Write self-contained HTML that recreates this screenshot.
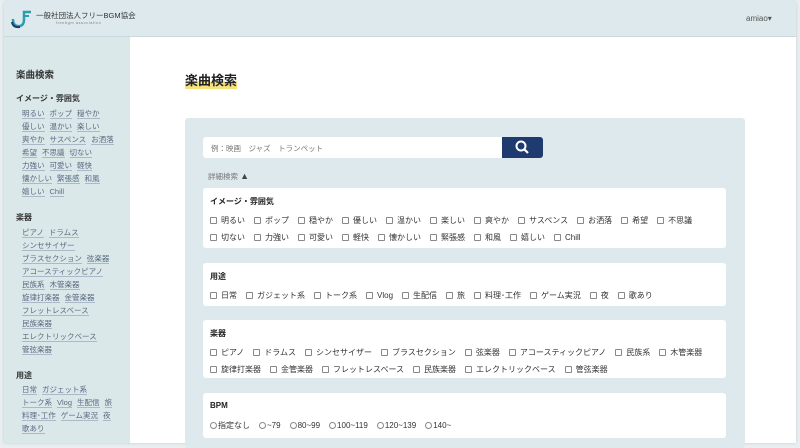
<!DOCTYPE html>
<html><head><meta charset="utf-8"><style>
*{box-sizing:border-box;margin:0;padding:0}
body{width:800px;height:443px;overflow:hidden;background:#e9eef0;font-family:"Liberation Sans","Noto Sans CJK JP",sans-serif;color:#333;position:relative}
.win{position:absolute;left:4px;top:0;width:792px;height:443px;background:#fff;border-radius:6px 6px 0 0;overflow:hidden;box-shadow:0 0 3px rgba(0,0,0,.15)}
.hdr{position:absolute;left:0;top:0;width:792px;height:37px;background:#dde9ec;border-bottom:1px solid #c9d8dc}
.side{position:absolute;left:0;top:37px;width:126px;height:406px;background:#dae8ea}
.side h3{position:absolute;font-size:9.5px;font-weight:bold;color:#333}
.side h4{position:absolute;font-size:8px;font-weight:bold;color:#333}
.links{position:absolute;left:18px;font-size:7.5px;color:#5a6a80;line-height:13px;width:108px}
.links span{border-bottom:1px solid #aab8c8;margin-right:5px;white-space:nowrap}
.title{position:absolute;left:185px;top:70px;font-size:13px;font-weight:bold;color:#222;background:linear-gradient(transparent 60%,#f5e27a 60%)}
.panel{position:absolute;left:185px;top:118px;width:560px;height:330px;background:#dde9ec;border-radius:3px}
.inp{position:absolute;left:203px;top:137px;width:299px;height:21px;background:#fff;border-radius:3px 0 0 3px;font-size:7.5px;color:#777;padding:6px 0 0 8px}
.btn{position:absolute;left:502px;top:137px;width:41px;height:21px;background:#1f3a6e;border-radius:0 3px 3px 0}
.det{position:absolute;left:208px;top:171px;font-size:7.5px;color:#777}
.card{position:absolute;left:203px;width:523px;background:#fff;border-radius:3px;padding:0 7px}
.card b{display:block;font-size:8px;color:#222;margin-top:8px;height:16px}
.row{font-size:8px;color:#333;height:17px;line-height:17px;white-space:nowrap}
.c{display:inline-block;width:7px;height:7px;border:1px solid #888;border-radius:1px;margin:0 4px 0 0;vertical-align:-1px}
.row i{font-style:normal;margin-right:9px}
.r{display:inline-block;width:7px;height:7px;border:1px solid #888;border-radius:50%;margin-right:1px;vertical-align:-1px}
</style></head><body>
<div class="win">
<div class="hdr">
<svg style="position:absolute;left:6px;top:9px" width="22" height="20" viewBox="0 0 22 20"><path d="M3 10 Q3 18 10 17 Q14 16 14 11 L14 3 L21 3" fill="none" stroke="#2a9db0" stroke-width="2.5"/><path d="M2 13 Q3 19 10 18" fill="none" stroke="#1f3a6e" stroke-width="2"/><rect x="14" y="6" width="5" height="2" fill="#2a9db0"/></svg>
<div style="position:absolute;left:32px;top:10px;font-size:7.5px;color:#333">一般社団法人フリーBGM協会</div>
<div style="position:absolute;left:52px;top:20px;font-size:4px;color:#888;letter-spacing:.5px">freebgm association</div>
<div style="position:absolute;left:742px;top:14px;font-size:8px;color:#555">amiao▾</div>
</div>
<div class="side">
<h3 style="left:12px;top:30px">楽曲検索</h3>
<h4 style="left:12px;top:56px">イメージ・雰囲気</h4>
<div class="links" style="top:70px"><span>明るい</span><span>ポップ</span><span>穏やか</span><br><span>優しい</span><span>温かい</span><span>楽しい</span><br><span>爽やか</span><span>サスペンス</span><span>お洒落</span><br><span>希望</span><span>不思議</span><span>切ない</span><br><span>力強い</span><span>可愛い</span><span>軽快</span><br><span>懐かしい</span><span>緊張感</span><span>和風</span><br><span>嬉しい</span><span>Chill</span></div>
<h4 style="left:12px;top:175px">楽器</h4>
<div class="links" style="top:189px"><span>ピアノ</span><span>ドラムス</span><br><span>シンセサイザー</span><br><span>ブラスセクション</span><span>弦楽器</span><br><span>アコースティックピアノ</span><br><span>民族系</span><span>木管楽器</span><br><span>旋律打楽器</span><span>金管楽器</span><br><span>フレットレスベース</span><br><span>民族楽器</span><br><span>エレクトリックベース</span><br><span>管弦楽器</span></div>
<h4 style="left:12px;top:333px">用途</h4>
<div class="links" style="top:346px;left:18px"><span>日常</span><span>ガジェット系</span><br><span>トーク系</span><span>Vlog</span><span>生配信</span><span>旅</span><br><span>料理･工作</span><span>ゲーム実況</span><span>夜</span><br><span>歌あり</span></div>
</div>
</div>
<div class="title">楽曲検索</div>
<div class="panel"></div>
<div class="inp">例：映画　ジャズ　トランペット</div>
<div class="btn"><svg width="41" height="21" viewBox="0 0 41 21"><circle cx="19" cy="9" r="4.5" fill="none" stroke="#fff" stroke-width="2"/><path d="M22 12 L26 16" stroke="#fff" stroke-width="2.2"/></svg></div>
<div class="det">詳細検索 <span style="color:#444;font-size:9px">▲</span></div>
<div class="card" style="top:188px;height:60px"><b>イメージ・雰囲気</b>
<div class="row"><span class="c"></span><i>明るい</i><span class="c"></span><i>ポップ</i><span class="c"></span><i>穏やか</i><span class="c"></span><i>優しい</i><span class="c"></span><i>温かい</i><span class="c"></span><i>楽しい</i><span class="c"></span><i>爽やか</i><span class="c"></span><i>サスペンス</i><span class="c"></span><i>お洒落</i><span class="c"></span><i>希望</i><span class="c"></span><i>不思議</i></div>
<div class="row"><span class="c"></span><i>切ない</i><span class="c"></span><i>力強い</i><span class="c"></span><i>可愛い</i><span class="c"></span><i>軽快</i><span class="c"></span><i>懐かしい</i><span class="c"></span><i>緊張感</i><span class="c"></span><i>和風</i><span class="c"></span><i>嬉しい</i><span class="c"></span><i>Chill</i></div></div>
<div class="card" style="top:263px;height:43px"><b>用途</b>
<div class="row"><span class="c"></span><i>日常</i><span class="c"></span><i>ガジェット系</i><span class="c"></span><i>トーク系</i><span class="c"></span><i>Vlog</i><span class="c"></span><i>生配信</i><span class="c"></span><i>旅</i><span class="c"></span><i>料理･工作</i><span class="c"></span><i>ゲーム実況</i><span class="c"></span><i>夜</i><span class="c"></span><i>歌あり</i></div></div>
<div class="card" style="top:320px;height:58px"><b>楽器</b>
<div class="row"><span class="c"></span><i>ピアノ</i><span class="c"></span><i>ドラムス</i><span class="c"></span><i>シンセサイザー</i><span class="c"></span><i>ブラスセクション</i><span class="c"></span><i>弦楽器</i><span class="c"></span><i>アコースティックピアノ</i><span class="c"></span><i>民族系</i><span class="c"></span><i>木管楽器</i></div>
<div class="row"><span class="c"></span><i>旋律打楽器</i><span class="c"></span><i>金管楽器</i><span class="c"></span><i>フレットレスベース</i><span class="c"></span><i>民族楽器</i><span class="c"></span><i>エレクトリックベース</i><span class="c"></span><i>管弦楽器</i></div></div>
<div class="card" style="top:393px;height:45px"><b>BPM</b>
<div class="row"><span class="r"></span><i>指定なし</i><span class="r"></span><i>~79</i><span class="r"></span><i>80~99</i><span class="r"></span><i>100~119</i><span class="r"></span><i>120~139</i><span class="r"></span><i>140~</i></div></div>
</body></html>
